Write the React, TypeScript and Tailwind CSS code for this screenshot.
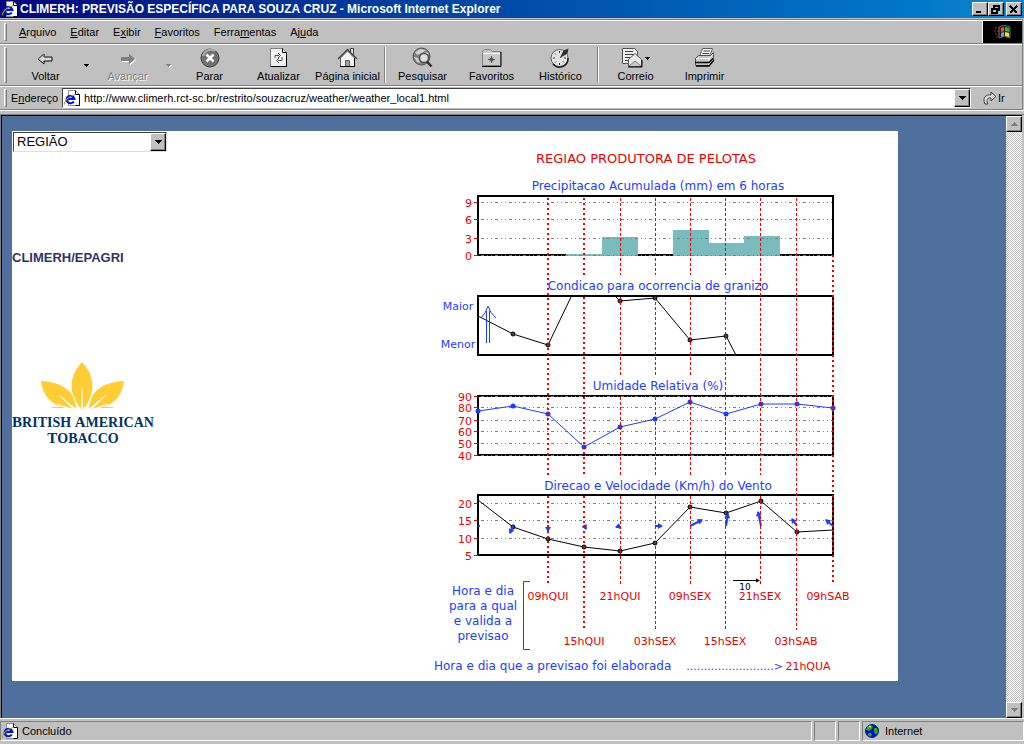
import React from "react";

const raised =
  "border border-t-white border-l-white border-r-black border-b-black bg-[#c0c0c0] shadow-[inset_-1px_-1px_0_#808080]";

function PageIcon() {
  return (
    <svg width="16" height="16" viewBox="0 0 16 16" className="shrink-0" aria-hidden="true">
      <path d="M4.500 .5h7l4 4v11h-11z" fill="#fff" stroke="#909090" />
      <path d="M11.500 .5v4h4v11h-4" fill="none" stroke="#000" />
      <path d="M9.800 11.500A3.900 3.700 0 1 1 10.300 8.800H3" fill="none" stroke="#0010f0" strokeWidth="2.200" />
      <path d="M1 14.500C-.5 12 4 6 11.500 4.500" fill="none" stroke="#a8a000" strokeWidth="1.200" />
    </svg>
  );
}

function GlobeIcon() {
  return (
    <svg width="14" height="14" viewBox="0 0 14 14" className="shrink-0" aria-hidden="true">
      <circle cx="7" cy="7" r="6.500" fill="#0000d0" stroke="#003060" />
      <path d="M2 3l3-2 3 1-1 3-3 2-3-1zM9 4l3 0 1 4-2 3-2-3zM3 9l3 0 1 2-2 2-2-2z" fill="#20b020" />
      <path d="M4 2l2 0-1 2z" fill="#c0ffc0" />
    </svg>
  );
}

const icons: Record<string, React.ReactNode> = {
  back: (
    <>
      <path d="M3 12l6-5v3h8v4H9v3z" fill="#d8d8d8" stroke="#000" />
      <path d="M3 12l6-5v3h8" fill="none" stroke="#707070" />
    </>
  ),
  forward: (
    <>
      <path d="M19 13l-6 5.500V15H5v-4h8V8z" fill="#fff" />
      <path d="M18 12l-6 5.500V14H4v-4h8V6.500z" fill="#808080" />
    </>
  ),
  stop: (
    <>
      <circle cx="11" cy="11" r="9" fill="#707070" stroke="#404040" />
      <path d="M4 9a8 8 0 0 1 12-5" fill="none" stroke="#b0b0b0" strokeWidth="2" />
      <path d="M7.500 7.500l7 7m0-7l-7 7" stroke="#fff" strokeWidth="2.600" />
    </>
  ),
  refresh: (
    <>
      <path d="M2.500 1.500h12l4 4v14h-16z" fill="#f0f0f0" stroke="#808080" />
      <path d="M14.500 1.500v4h4v14h-16" fill="none" stroke="#000" />
      <path d="M7 11V8.500h4M10 6l2.500 2.500L10 11M14 10v3.500h-4M11 11l-2.500 2.500L11 16" fill="none" stroke="#505050" />
    </>
  ),
  home: (
    <>
      <path d="M13.500 6V1.500h3V9" fill="#ddd" stroke="#404040" />
      <path d="M3.500 11v8.500h14V11L10.500 4z" fill="#f4f4f4" stroke="#606060" />
      <path d="M1 12L10.500 2.500 20 12" fill="none" stroke="#404040" strokeWidth="1.400" />
      <path d="M8.500 19.500v-6h4v6z" fill="#a0a0a0" stroke="#606060" />
      <path d="M3 19.500h15M17.500 11v9" stroke="#000" />
    </>
  ),
  search: (
    <>
      <circle cx="9.500" cy="9.500" r="8.500" fill="#808080" stroke="#505050" />
      <path d="M3 5l5-3 6 1-4 3-5 2zM2 10l4 1 2 5-3-1zM13 4l4 3-2 1z" fill="#d0d0d0" />
      <circle cx="12" cy="11" r="4.500" fill="#e0e0e0" stroke="#505050" strokeWidth="1.500" />
      <path d="M15 14.500l4.500 5" stroke="#303030" strokeWidth="2.500" />
    </>
  ),
  favorites: (
    <>
      <path d="M1.500 18.500v-14l2-2h6l2 2h8v14z" fill="#c8c8c8" stroke="#808080" />
      <path d="M2 6.500h17" stroke="#fff" />
      <path d="M1 19.500h19V5" fill="none" stroke="#000" />
      <path d="M10.500 9v7M7 12.500h7M8.500 10.500l4 4m0-4l-4 4" stroke="#505050" />
    </>
  ),
  history: (
    <>
      <circle cx="9.500" cy="11" r="8.500" fill="#e4e4e4" stroke="#606060" />
      <path d="M3 17a8.500 8.500 0 0 0 15-6" fill="none" stroke="#202020" strokeWidth="1.500" />
      <path d="M9.500 4v2M9.500 16v2M3 11h2M14 11h2M5 6.500l1 1M5 15.500l1-1M14 15.500l-1-1" stroke="#303030" />
      <path d="M9.500 11.500l4-8 5-2-1 5z" fill="#303030" />
    </>
  ),
  mail: (
    <>
      <path d="M1.500 1.500h12l3 3v12h-15z" fill="#eee" stroke="#505050" />
      <path d="M4 4.500h8M4 7.500h9M4 10.500h5M4 13.500h3" stroke="#404040" />
      <path d="M7.500 12.500l6.500-6 6.500 6v7h-13z" fill="#e8e8e8" stroke="#606060" />
      <path d="M8 19l6-5 6 5" fill="#c8c8c8" stroke="#808080" />
      <path d="M7 20h14v-7" fill="none" stroke="#000" />
    </>
  ),
  print: (
    <>
      <path d="M5.500 9.500l3-8h10l-3 8z" fill="#fff" stroke="#606060" />
      <path d="M9.500 4h6.500M8.500 6.500h6.500" stroke="#404040" />
      <path d="M1.500 11.500l3-3h12l3-3v8l-4 5h-14z" fill="#c4c4c4" stroke="#505050" />
      <path d="M2 11.500h13v7M15 11.500l4-4" fill="none" stroke="#fff" />
      <path d="M1 15.500h14l4-4M2 19h13l5-6" fill="none" stroke="#000" strokeWidth="1.300" />
    </>
  ),
};

function Arrow({ className = "fill-black" }: { className?: string }) {
  return (
    <svg width="7" height="4" viewBox="0 0 7 4" className={className} aria-hidden="true" shapeRendering="crispEdges">
      <path d="M0 0h7v1H6v1H5v1H4v1H3V3H2V2H1V1H0z" />
    </svg>
  );
}

function SmallArrow({ className = "fill-black" }: { className?: string }) {
  return (
    <svg width="5" height="3" viewBox="0 0 5 3" className={className} aria-hidden="true" shapeRendering="crispEdges">
      <path d="M0 0h5v1H4v1H3v1H2V2H1V1H0z" />
    </svg>
  );
}

function Tool({ icon, label, disabled, menu }: { icon: string; label: string; disabled?: boolean; menu?: boolean }) {
  return (
    <button type="button" disabled={disabled} className="flex w-[69px] shrink-0 flex-col items-center whitespace-nowrap pt-0.5">
      <span className="flex items-center gap-0.5">
        <svg width="22" height="22" viewBox="0 0 22 22" aria-hidden="true">
          {icons[icon]}
        </svg>
        {menu && <SmallArrow />}
      </span>
      <span className={disabled ? "leading-[14px] text-[#808080] [text-shadow:1px_1px_0_#fff]" : "leading-[14px]"}>
        {label}
      </span>
    </button>
  );
}

function Drop({ label, disabled }: { label: string; disabled?: boolean }) {
  return (
    <button type="button" aria-label={label} disabled={disabled} className="flex w-[13px] shrink-0 items-center justify-center">
      <SmallArrow className={disabled ? "fill-[#808080] drop-shadow-[1px_1px_0_#fff]" : "fill-black"} />
    </button>
  );
}

function Grip() {
  return <div className="my-0.5 mr-2 w-[3px] shrink-0 self-stretch border border-t-white border-l-white border-r-[#808080] border-b-[#808080]" />;
}

function Divider() {
  return <div className="mx-0.5 h-9 w-0.5 shrink-0 self-center border-r border-l border-r-white border-l-[#808080]" />;
}

const menus: [string, string, string][] = [
  ["", "A", "rquivo"],
  ["", "E", "ditar"],
  ["E", "x", "ibir"],
  ["", "F", "avoritos"],
  ["Ferra", "m", "entas"],
  ["Aj", "u", "da"],
];

type Point = [number, number];
const hail: Point[] = [[478, 316], [513, 334], [548, 345], [571, 297]];
const hailTail: Point[] = [[616, 297], [620, 301], [655, 298], [690, 340], [726, 336], [736, 355]];
const humidity: Point[] = [[478, 411], [513, 406], [548, 414], [584, 447], [620, 427], [655, 419], [690, 402], [726, 414], [761, 404], [797, 404], [833, 408]];
const wind: Point[] = [[478, 500], [513, 527], [548, 539], [584, 547], [620, 551], [655, 543], [690, 507], [726, 513], [761, 501], [797, 532], [833, 530]];
const windArrows: [number, number, number, number][] = [
  [513, 526, 510, 533], [548, 525, 548, 531], [584, 525, 586, 529], [620, 526, 616, 527], [655, 526, 662, 526],
  [690, 526, 702, 520], [726, 526, 728, 514], [761, 526, 758, 512], [797, 526, 792, 519], [833, 526, 826, 520],
];
const bars = [
  { x: 566, y: 254, w: 36 }, { x: 602, y: 237, w: 36 }, { x: 673, y: 230, w: 36 }, { x: 709, y: 243, w: 35 }, { x: 744, y: 236, w: 36 },
];
const scales: [string, number][] = [
  ["9", 202], ["6", 219], ["3", 238], ["0", 255],
  ["90", 396], ["80", 407], ["70", 420], ["60", 431], ["50", 443], ["40", 455],
  ["20", 503], ["15", 520], ["10", 538], ["5", 555],
];
const hours: { x: number; label: string; low?: boolean; wide?: boolean; segments: Point[] }[] = [
  { x: 548, label: "09hQUI", wide: true, segments: [[198, 475], [496, 585]] },
  { x: 584, label: "15hQUI", wide: true, low: true, segments: [[198, 275], [297, 475], [496, 630]] },
  { x: 620, label: "21hQUI", segments: [[198, 275], [297, 375], [397, 475], [496, 585]] },
  { x: 655, label: "03hSEX", low: true, segments: [[198, 275], [297, 375], [397, 475], [496, 630]] },
  { x: 690, label: "09hSEX", segments: [[198, 275], [297, 375], [397, 475], [496, 585]] },
  { x: 725, label: "15hSEX", low: true, segments: [[198, 275], [297, 475], [496, 630]] },
  { x: 760, label: "21hSEX", segments: [[198, 475], [496, 585]] },
  { x: 796, label: "03hSAB", low: true, segments: [[198, 630]] },
  { x: 833, label: "09hSAB", wide: true, segments: [[255, 585]] },
];
const line = (p: Point[]) => p.map((q) => q.join(",")).join(" ");

function ArrowMark({ a }: { a: [number, number, number, number] }) {
  const [x1, y1, x2, y2] = a;
  const d = Math.hypot(x2 - x1, y2 - y1);
  const ux = (x2 - x1) / d;
  const uy = (y2 - y1) / d;
  const bx = x2 - ux * 4;
  const by = y2 - uy * 4;
  return (
    <g stroke="#1e3cff" fill="#1e3cff">
      <path d={`M${x1} ${y1}L${x2} ${y2}`} strokeWidth="2" />
      <path d={`M${x2 + ux} ${y2 + uy}L${bx - uy * 3} ${by + ux * 3}L${bx + uy * 3} ${by - ux * 3}z`} stroke="none" />
    </g>
  );
}

function Chart() {
  return (
    <svg
      width="468"
      height="550"
      viewBox="430 131 468 550"
      className="block shrink-0 font-['DejaVu_Sans',sans-serif] text-[11px]"
      role="img"
      aria-label="REGIAO PRODUTORA DE PELOTAS"
    >
      <g fill="none" stroke="#000" strokeWidth="2">
        <rect x="478" y="196" width="355" height="59" />
        <rect x="478" y="296" width="355" height="59" />
        <rect x="478" y="396" width="355" height="59" />
        <rect x="478" y="495" width="355" height="60" />
      </g>
      {bars.map((b) => (
        <rect key={b.x} x={b.x} y={b.y} width={b.w} height={256 - b.y} fill="#78bcbe" />
      ))}
      {scales.map(([t, y]) => (
        <g key={y}>
          {t !== "5" && <path d={`M481 ${y + 0.5}H832`} fill="none" stroke="#808080" strokeDasharray="3 3 1 3 1 3" />}
          <path d={`M474 ${y + 0.5}h4`} fill="none" stroke="#e60000" />
        </g>
      ))}
      <g fill="none" stroke="#000" strokeWidth="1">
        <polyline points={line(hail)} />
        <polyline points={line(hailTail)} />
        <polyline points={line(wind)} />
        <polyline points={line(humidity)} stroke="#1e3cff" />
      </g>
      {[...hail.slice(1, 3), ...hailTail.slice(1, 5), ...wind.slice(1, 10)].map(([x, y]) => (
        <circle key={`${x}-${y}`} cx={x} cy={y} r="2" stroke="#000" fill="#444" />
      ))}
      {humidity.map(([x, y]) => (
        <circle key={x} cx={x} cy={y} r="2.500" fill="#1e3cff" />
      ))}
      {windArrows.map((a) => (
        <ArrowMark key={a[0]} a={a} />
      ))}
      <rect x="478" y="525" width="2" height="2" fill="#1e3cff" />
      <path d="M486.500 343V311M489.500 343V311M481 318Q486 313 488 306Q490 313 496 318" fill="none" stroke="#1e3cff" />
      {hours.map((h) =>
        h.segments.map(([a, b]) => (
          <path
            key={`${h.x}-${a}`}
            d={h.wide ? `M${h.x} ${a}V${b}` : `M${h.x + 0.5} ${a}V${b}`}
            fill="none"
            stroke="#f00000"
            strokeWidth={h.wide ? 2 : 1}
            strokeDasharray={h.wide ? "2 3" : "3 2"}
          />
        ))
      )}

      <g fill="#e60000" textAnchor="end">
        {scales.map(([t, y]) => (
          <text key={y} x="472" y={y + 5}>
            {t}
          </text>
        ))}
      </g>
      <g fill="#e60000" textAnchor="middle">
        <text x="646" y="163" className="text-[13px]">
          REGIAO PRODUTORA DE PELOTAS
        </text>
        {hours.map((h) => (
          <text key={h.x} x={h.x === 833 ? 828 : h.x} y={h.low ? 645 : 600}>
            {h.label}
          </text>
        ))}
        <text x="808" y="670">21hQUA</text>
      </g>
      <g fill="#1e3cff" textAnchor="middle">
        <g className="text-[12px]">
          <text x="658" y="190">Precipitacao Acumulada (mm) em 6 horas</text>
          <text x="658" y="290">Condicao para ocorrencia de granizo</text>
          <text x="658" y="390">Umidade Relativa (%)</text>
          <text x="658" y="490">Direcao e Velocidade (Km/h) do Vento</text>
          <text x="483" y="595">Hora e dia</text>
          <text x="483" y="610">para a qual</text>
          <text x="483" y="625">e valida a</text>
          <text x="483" y="640">previsao</text>
        </g>
        <text x="458" y="310">Maior</text>
        <text x="458" y="348">Menor</text>
      </g>
      <text x="434" y="670" fill="#1e3cff" className="text-[12px]">
        Hora e dia que a previsao foi elaborada
      </text>
      <text x="783" y="670" textAnchor="end" fill="#1e3cff">
        .........................&gt;
      </text>
      <path d="M530 581.500h-6.500v68h6.500" fill="none" stroke="#1e3cff" />
      <path d="M733 580.500h24" stroke="#000" />
      <path d="M760 580.500l-4-2v4z" />
      <text x="745" y="590" textAnchor="middle" className="text-[9px]">
        10
      </text>
    </svg>
  );
}

function BrandLogo() {
  return (
    <svg width="144" height="84" viewBox="0 0 144 84" className="block" role="img" aria-label="British American Tobacco">
      <g fill="#ffcc33">
        <path d="M70 0C58 13 56 27 66 44L70 47l4-3C84 27 82 13 70 0z" />
        <path d="M29 19c2 16 11 26 32 28l4-2C62 29 50 20 29 19z" />
        <path d="M112 19c-2 16-11 26-32 28l-4-2C79 29 91 20 112 19z" />
        <path d="M38 46c8-2 18-1 26 0H38zM103 46c-8-2-18-1-26 0h26z" />
      </g>
      <path d="M69.500 46l.5-20 .5 20zM67 46l-6-13 4 14zM74 46l6-13-4 14zM64 47L47 33l14 14zM77 47l17-14-14 14zM60 47l-15-5 13 6zM81 47l15-5-13 6z" fill="#fff" stroke="#fff" strokeWidth=".5" />
      <g className="font-['Liberation_Serif',serif] text-[14px] font-bold" fill="#003366" textAnchor="middle">
        <text x="71" y="65">
          <tspan className="text-[15px]">B</tspan>RITISH <tspan className="text-[15px]">A</tspan>MERICAN
        </text>
        <text x="71" y="81">
          <tspan className="text-[15px]">T</tspan>OBACCO
        </text>
      </g>
    </svg>
  );
}

function WindowButton({ label, d }: { label: string; d: string }) {
  return (
    <button type="button" aria-label={label} className={`flex h-3.5 w-4 items-center justify-center ${raised}`}>
      <svg width="10" height="9" viewBox="0 0 10 9" shapeRendering="crispEdges" aria-hidden="true">
        <path d={d} fill="none" stroke="#000" strokeWidth="1.500" />
      </svg>
    </button>
  );
}

export default function App() {
  return (
    <div className="flex min-h-screen flex-col bg-[#c0c0c0] font-['Liberation_Sans',Arial,sans-serif] text-[11px] text-black">
      <header>
        <div className="flex h-[18px] items-center gap-0.5 bg-linear-to-r from-[#000080] to-[#1084d0] pr-0.5 pl-0.5">
          <PageIcon />
          <h1 className="grow text-[12px] font-bold whitespace-nowrap text-white">
            CLIMERH: PREVISÃO ESPECÍFICA PARA SOUZA CRUZ - Microsoft Internet Explorer
          </h1>
          <div className="flex">
            <WindowButton label="Minimizar" d="M1 7h5" />
            <WindowButton label="Restaurar" d="M3 3V1h5v4H6M1 4h5v4H1z" />
            <div className="ml-0.5 flex">
              <WindowButton label="Fechar" d="M1 1l7 7M8 1L1 8" />
            </div>
          </div>
        </div>

        <div className="mt-px mr-px border-t border-r border-[#808080]">
          <div className="flex h-6 border-t border-b border-t-white border-b-[#808080] pl-1">
            <Grip />
            <nav className="flex grow items-center gap-3.5 pl-1">
              {menus.map(([a, u, b]) => (
                <button key={a + u + b} type="button">
                  {a}
                  <u>{u}</u>
                  {b}
                </button>
              ))}
            </nav>
            <div className="flex w-10 items-center justify-center border-l border-white bg-black">
              <svg width="18" height="16" viewBox="0 0 18 16" aria-hidden="true">
                <path d="M1 4h4M0 7h5M1 10h4M2 13h3" stroke="#a04030" strokeDasharray="2 1" />
                <path d="M5 3q4-3 11 0v11q-6-3-11 0z" fill="#202020" stroke="#666" />
                <path d="M7 4l3-1v4l-3 1z" fill="#f05030" />
                <path d="M11 3l4 1v4l-4-1z" fill="#30b040" />
                <path d="M7 9l3-1v4l-3 1z" fill="#60a0f0" />
                <path d="M11 8l4 1v4l-4-1z" fill="#ffe020" />
              </svg>
            </div>
          </div>

          <div className="flex h-[42px] border-t border-b border-t-white border-b-[#808080] pl-1">
            <Grip />
            <div className="-ml-1 flex">
              <Tool icon="back" label="Voltar" />
              <Drop label="Histórico de voltar" />
              <Tool icon="forward" label="Avançar" disabled />
              <Drop label="Histórico de avançar" disabled />
              <Tool icon="stop" label="Parar" />
              <Tool icon="refresh" label="Atualizar" />
              <Tool icon="home" label="Página inicial" />
              <Divider />
              <Tool icon="search" label="Pesquisar" />
              <Tool icon="favorites" label="Favoritos" />
              <Tool icon="history" label="Histórico" />
              <Divider />
              <Tool icon="mail" label="Correio" menu />
              <Tool icon="print" label="Imprimir" />
            </div>
          </div>

          <div className="flex h-6 border-t border-b border-t-white border-b-[#808080] pl-1">
            <Grip />
            <label htmlFor="address" className="-ml-1 flex w-[51px] shrink-0 items-center whitespace-pre">
              E<u>n</u>dereço
            </label>
            <div className="my-px flex grow items-center border border-t-[#404040] border-l-[#404040] border-r-white border-b-white bg-white pl-px">
              <PageIcon />
              <input
                id="address"
                type="text"
                className="min-w-0 grow bg-white pl-1 outline-none"
                defaultValue="http://www.climerh.rct-sc.br/restrito/souzacruz/weather/weather_local1.html"
              />
              <button type="button" aria-label="Endereços anteriores" className={`flex w-4 items-center justify-center self-stretch ${raised}`}>
                <Arrow />
              </button>
            </div>
            <button type="button" className="flex w-[51px] shrink-0 items-center gap-px pl-3">
              <svg width="14" height="16" viewBox="0 0 14 16" aria-hidden="true">
                <path d="M2 14C-1 8 3 4 8 5V2l5 4.500L8 11V8C4 7 3 11 5 14z" fill="#ddd" stroke="#404040" />
              </svg>
              Ir
            </button>
          </div>
        </div>
        <div className="h-1 border-t border-white" />
      </header>

      <div className="flex grow border-t border-l border-[#808080] pr-0.5">
        <main className="grow border-t border-l border-black bg-[#4f709d] pt-[15px] pr-[108px] pb-9 pl-2.5">
          <div className="flex justify-between bg-white">
            <aside className="w-40 shrink-0">
              <div className="relative mt-px ml-px flex h-5 w-[154px]">
                <select
                  aria-label="Região"
                  className="w-full appearance-none border border-t-[#404040] border-l-[#404040] border-r-[#dfdfdf] border-b-[#dfdfdf] bg-white pl-[3px] text-[13px] leading-4 outline-none"
                >
                  <option>REGIÃO</option>
                </select>
                <span className={`pointer-events-none absolute top-px right-px flex h-[18px] w-4 items-center justify-center ${raised}`}>
                  <Arrow />
                </span>
              </div>
              <p className="mt-[98px] text-[13px] leading-4 font-bold text-[#333366]">CLIMERH/EPAGRI</p>
              <div className="mt-24">
                <BrandLogo />
              </div>
            </aside>
            <Chart />
          </div>
        </main>
        <div className="flex w-4 shrink-0 flex-col justify-between border-t border-black bg-[conic-gradient(#fff_25%,#c0c0c0_0_50%,#fff_0_75%,#c0c0c0_0)] bg-[length:2px_2px]">
          <button type="button" aria-label="Rolar para cima" className={`flex h-4 items-center justify-center ${raised}`}>
            <span className="rotate-180">
              <Arrow className="fill-[#808080]" />
            </span>
          </button>
          <button type="button" aria-label="Rolar para baixo" className={`flex h-4 items-center justify-center ${raised}`}>
            <Arrow className="fill-[#808080]" />
          </button>
        </div>
      </div>

      <footer className="border-t border-white pt-0.5 pb-[3px]">
        <div className="flex h-5 gap-0.5">
          <div className="flex grow items-center gap-1 border border-[#808080] border-r-white border-b-white pl-px">
            <PageIcon />
            Concluído
          </div>
          <div className="w-[22px] border border-[#808080] border-r-white border-b-white" />
          <div className="w-[22px] border border-[#808080] border-r-white border-b-white" />
          <div className="flex w-[162px] items-center gap-1.5 border border-[#808080] border-r-white border-b-white pl-0.5">
            <GlobeIcon />
            Internet
          </div>
        </div>
      </footer>
    </div>
  );
}
